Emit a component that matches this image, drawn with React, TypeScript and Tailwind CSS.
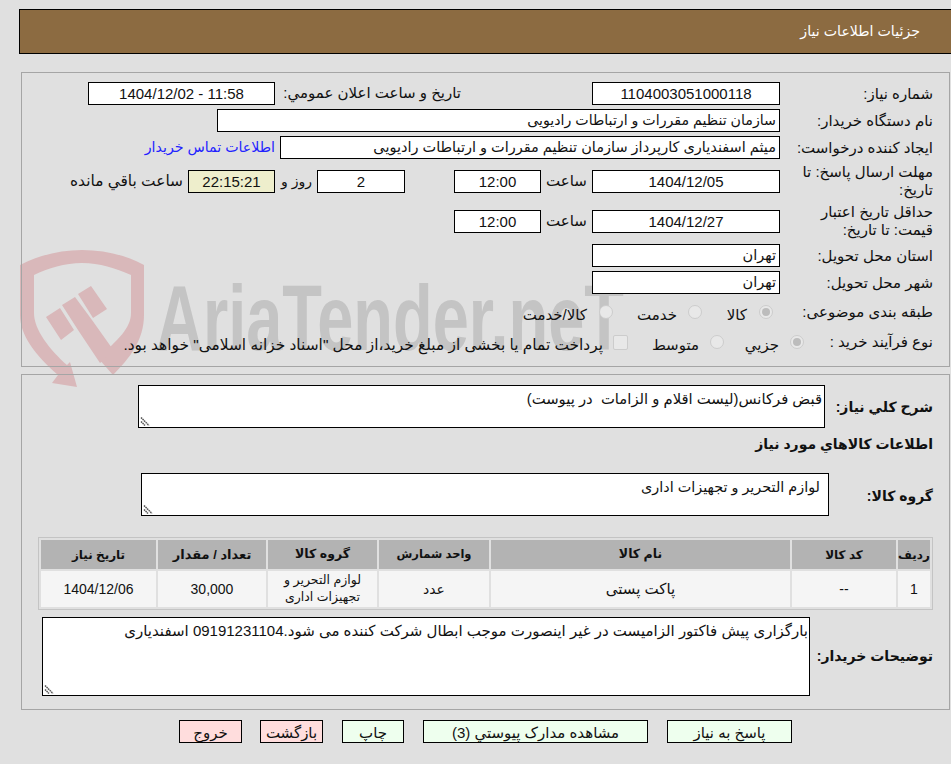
const F = "font-['Liberation_Sans','DejaVu_Sans',sans-serif]";

function Box({ className = "", children, bg = "bg-white" }: { className?: string; children?: React.ReactNode; bg?: string }) {
  return (
    <div className={`h-[23px] shrink-0 border border-black ${bg} flex items-center px-[3px] leading-none overflow-hidden whitespace-nowrap ${className}`}>
      {children}
    </div>
  );
}

function Grip() {
  return (
    <svg className="absolute left-0 bottom-0" width="12" height="12" viewBox="0 0 12 12">
      <path d="M2 2.5l8 8M2 6.5l4 4" stroke="#555" strokeWidth="1.5" fill="none" strokeDasharray="1.6 0.6" />
    </svg>
  );
}

function Radio({ on }: { on?: boolean }) {
  return (
    <span className="w-[14px] h-[14px] rounded-full border border-[#cccccc] bg-[#e8e8e8] flex items-center justify-center shrink-0">
      {on && <span className="w-[8px] h-[8px] rounded-full bg-[#bcbcbc]" />}
    </span>
  );
}

function Label({ children, className = "w-[169px]" }: { children: React.ReactNode; className?: string }) {
  return <div className={`pr-[16px] text-[15px] leading-[18px] shrink-0 ${className}`}>{children}</div>;
}

function Watermark() {
  return (
    <svg dir="ltr" className="absolute left-0 top-0 pointer-events-none" width="951" height="400" viewBox="0 0 951 400">
      <path
        fill="#d9b8ba"
        d="M20 265C40 255 60 250 82 250C105 250 125 255 144 265L144 315C144 340 130 358 113 375L98 358C118 340 131 328 131 313L131 275C115 268 100 263 82 263C65 263 48 268 34 275L34 313C34 330 50 350 67 365L70 362L77 387L52 383L58 375C35 355 20 335 20 315Z"
      />
      <path fill="#d9b8ba" d="M46 317L60 308L74 330L61 340ZM62 305L75 297L92 320L114 351L100 363L78 330ZM78 294L91 286L107 309L93 318Z" />
      <text x="156" y="350" direction="ltr" fontFamily="'Liberation Sans',sans-serif" fontWeight="700" fontSize="92" fill="#c4c4c4" textLength="468" lengthAdjust="spacingAndGlyphs">
        AriaTender.neT
      </text>
    </svg>
  );
}

const heads: [string, string, string][] = [
  ["رديف", "w-[32px]", "text-[12px]"],
  ["کد کالا", "w-[104px]", "text-[12px]"],
  ["نام کالا", "w-[299px]", "text-[12.5px]"],
  ["واحد شمارش", "w-[110px]", "text-[11.5px]"],
  ["گروه کالا", "w-[109px]", "text-[12.5px]"],
  ["تعداد / مقدار", "w-[108px]", "text-[13px]"],
  ["تاريخ نياز", "w-[115px]", "text-[12px]"],
];

function Btn({ c, w, children }: { c: string; w: string; children: React.ReactNode }) {
  return (
    <div className={`h-[23px] pt-[2px] border border-black flex items-center justify-center text-[15px] leading-none ${c} ${w}`}>{children}</div>
  );
}

export default function App() {
  return (
    <div dir="rtl" className={`${F} relative w-[951px] h-[764px] bg-[#e0e0e0] text-[#111] pt-[9px] overflow-hidden`}>
      <Watermark />
      <div className="relative h-[45px] ml-[19px] -mr-[2px] border border-black bg-[#8c6b41] text-white text-[14.2px] flex items-center pr-[32px]">
        جزئيات اطلاعات نياز
      </div>

      <section className="relative mt-[18px] h-[295px] ml-[21px] mr-[1px] border border-[#a5a5a5] pt-[9px] text-[14.5px]">
        <div className="flex flex-col gap-[4px]">
          <div className="flex items-center h-[23px]">
            <Label>شماره نياز:</Label>
            <Box className="w-[188px] justify-center text-[15px]">1104003051000118</Box>
            <div className="text-[15px] mr-[131px] w-[186px] shrink-0 whitespace-nowrap">تاريخ و ساعت اعلان عمومي:</div>
            <Box className="w-[187px] justify-center text-[15px]"><span dir="ltr">1404/12/02 - 11:58</span></Box>
          </div>
          <div className="flex items-center h-[23px]">
            <Label>نام دستگاه خريدار:</Label>
            <Box className="w-[563px] text-[14.2px]">سازمان تنظيم مقررات و ارتباطات راديويی</Box>
          </div>
          <div className="flex items-center h-[23px]">
            <Label>ايجاد کننده درخواست:</Label>
            <Box className="w-[500px]">ميثم اسفنديارى کارپرداز سازمان تنظيم مقررات و ارتباطات راديويی</Box>
            <a className="text-[14.2px] text-[#2222ff] mr-[5px] whitespace-nowrap">اطلاعات تماس خريدار</a>
          </div>
          <div className="flex items-center h-[36px]">
            <Label>مهلت ارسال پاسخ: تا<br />تاريخ:</Label>
            <Box className="w-[188px] justify-center text-[15px]">1404/12/05</Box>
            <div className="w-[51px] text-[15px] text-center">ساعت</div>
            <Box className="w-[87px] justify-center text-[15px]">12:00</Box>
            <div className="w-[49px]" />
            <Box className="w-[88px] justify-center text-[15px]">2</Box>
            <div className="w-[42px] pr-[5px] text-[14px] text-right whitespace-nowrap">روز و</div>
            <Box className="w-[87px] justify-center text-[15px]" bg="bg-[#eeeecc]">22:15:21</Box>
            <div className="text-[15.4px] mr-[5px] whitespace-nowrap">ساعت باقي مانده</div>
          </div>
          <div className="flex items-center h-[36px]">
            <Label>حداقل تاريخ اعتبار<br />قيمت: تا تاريخ:</Label>
            <Box className="w-[188px] justify-center text-[15px]">1404/12/27</Box>
            <div className="w-[51px] text-[15px] text-center">ساعت</div>
            <Box className="w-[87px] justify-center text-[15px]">12:00</Box>
          </div>
          <div className="flex items-center h-[23px] mt-[1px]">
            <Label>استان محل تحويل:</Label>
            <Box className="w-[188px]">تهران</Box>
          </div>
          <div className="flex items-center h-[23px]">
            <Label>شهر محل تحويل:</Label>
            <Box className="w-[188px]">تهران</Box>
          </div>
          <div className="flex items-center h-[28px] text-[15px]">
            <Label>طبقه بندى موضوعى:</Label>
            <div className="flex items-center gap-[12px] w-[71px] mr-[7px] shrink-0"><Radio on /><span className="pt-[6px]">کالا</span></div>
            <div className="flex items-center gap-[11px] w-[89px] shrink-0"><Radio /><span className="pt-[6px]">خدمت</span></div>
            <div className="flex items-center gap-[12px]"><Radio /><span className="pt-[6px]">کالا/خدمت</span></div>
          </div>
          <div className="flex items-center h-[24px] text-[15px] whitespace-nowrap">
            <Label className="w-[145px]">نوع فرآيند خريد :</Label>
            <div className="flex items-center gap-[11px] w-[80px] shrink-0"><Radio on /><span className="pt-[6px]">جزيي</span></div>
            <div className="flex items-center gap-[11px] w-[96px] shrink-0"><Radio /><span className="pt-[6px]">متوسط</span></div>
            <span className="w-[15px] h-[15px] rounded-[2px] border border-[#cccccc] bg-[#e8e8e8] ml-[10px] shrink-0" />
            <span className="pt-[6px] text-[15.4px]">پرداخت تمام يا بخشى از مبلغ خريد،از محل "اسناد خزانه اسلامى" خواهد بود.</span>
          </div>
        </div>
      </section>

      <section className="relative mt-[7px] h-[336px] ml-[21px] mr-[1px] border border-[#a5a5a5] text-[14px]">
        <div className="flex items-center mt-[10px] font-bold">
          <div className="w-[124px] pr-[16px] shrink-0 whitespace-nowrap pt-[2px]">شرح کلي نياز:</div>
          <div className="relative w-[687px] h-[43px] border border-black bg-white pr-[2px] pt-[3px] text-[14.8px] font-normal leading-[20px] whitespace-pre">
            قبض فرکانس(ليست اقلام و الزامات  در پيوست)
            <Grip />
          </div>
        </div>
        <div className="font-bold mt-[6px] h-[20px] leading-[20px] pr-[16px]">اطلاعات کالاهاي مورد نياز</div>
        <div className="flex items-center mt-[19px] font-bold">
          <div className="w-[120px] pr-[16px] shrink-0 pt-[3px]">گروه کالا:</div>
          <div className="relative w-[688px] h-[43px] border border-black bg-white pr-[8px] pt-[3px] text-[14.4px] font-normal leading-[20px]">
            لوازم التحرير و تجهيزات ادارى
            <Grip />
          </div>
        </div>
        <table className="mt-[21px] mr-[16px] w-[895px] h-[73px] border border-[#c4c4c4] border-separate border-spacing-[2px] table-fixed">
          <thead>
            <tr className="h-[29px] bg-[#b3b3b3]">
              {heads.map(([h, w, s]) => (
                <th key={h} className={`${w} ${s} font-bold p-0 whitespace-nowrap`}>{h}</th>
              ))}
            </tr>
          </thead>
          <tbody>
            <tr className="h-[36px] bg-[#f5f5f5] text-center">
              <td className="p-0">1</td>
              <td className="p-0">--</td>
              <td className="p-0 text-[15px]">پاکت پستی</td>
              <td className="p-0">عدد</td>
              <td className="p-0 text-[12.5px] leading-[17px]">لوازم التحرير و<br />تجهيزات ادارى</td>
              <td className="p-0">30,000</td>
              <td className="p-0">1404/12/06</td>
            </tr>
          </tbody>
        </table>
        <div className="flex items-center mt-[7px] font-bold">
          <div className="w-[139px] pr-[16px] shrink-0 whitespace-nowrap">توضيحات خريدار:</div>
          <div className="relative w-[768px] h-[79px] border border-black bg-white pr-[1px] pt-[3px] text-[15px] font-normal leading-[20px] whitespace-nowrap">
            بارگزارى پيش فاکتور الزاميست در غير اينصورت موجب ابطال شرکت کننده می شود.09191231104 اسفندياری
            <Grip />
          </div>
        </div>
      </section>

      <div className="relative flex mt-[10px] mr-[159px] gap-[19px]">
        <Btn c="bg-[#eeffee]" w="w-[125px]">پاسخ به نياز</Btn>
        <Btn c="bg-[#eeffee]" w="w-[225px]">مشاهده مدارک پيوستي (3)</Btn>
        <Btn c="bg-[#eeffee]" w="w-[62px]">چاپ</Btn>
        <Btn c="bg-[#ffdddd]" w="w-[63px]">بازگشت</Btn>
        <Btn c="bg-[#ffdddd] -mr-[1px]" w="w-[63px]">خروج</Btn>
      </div>
    </div>
  );
}
